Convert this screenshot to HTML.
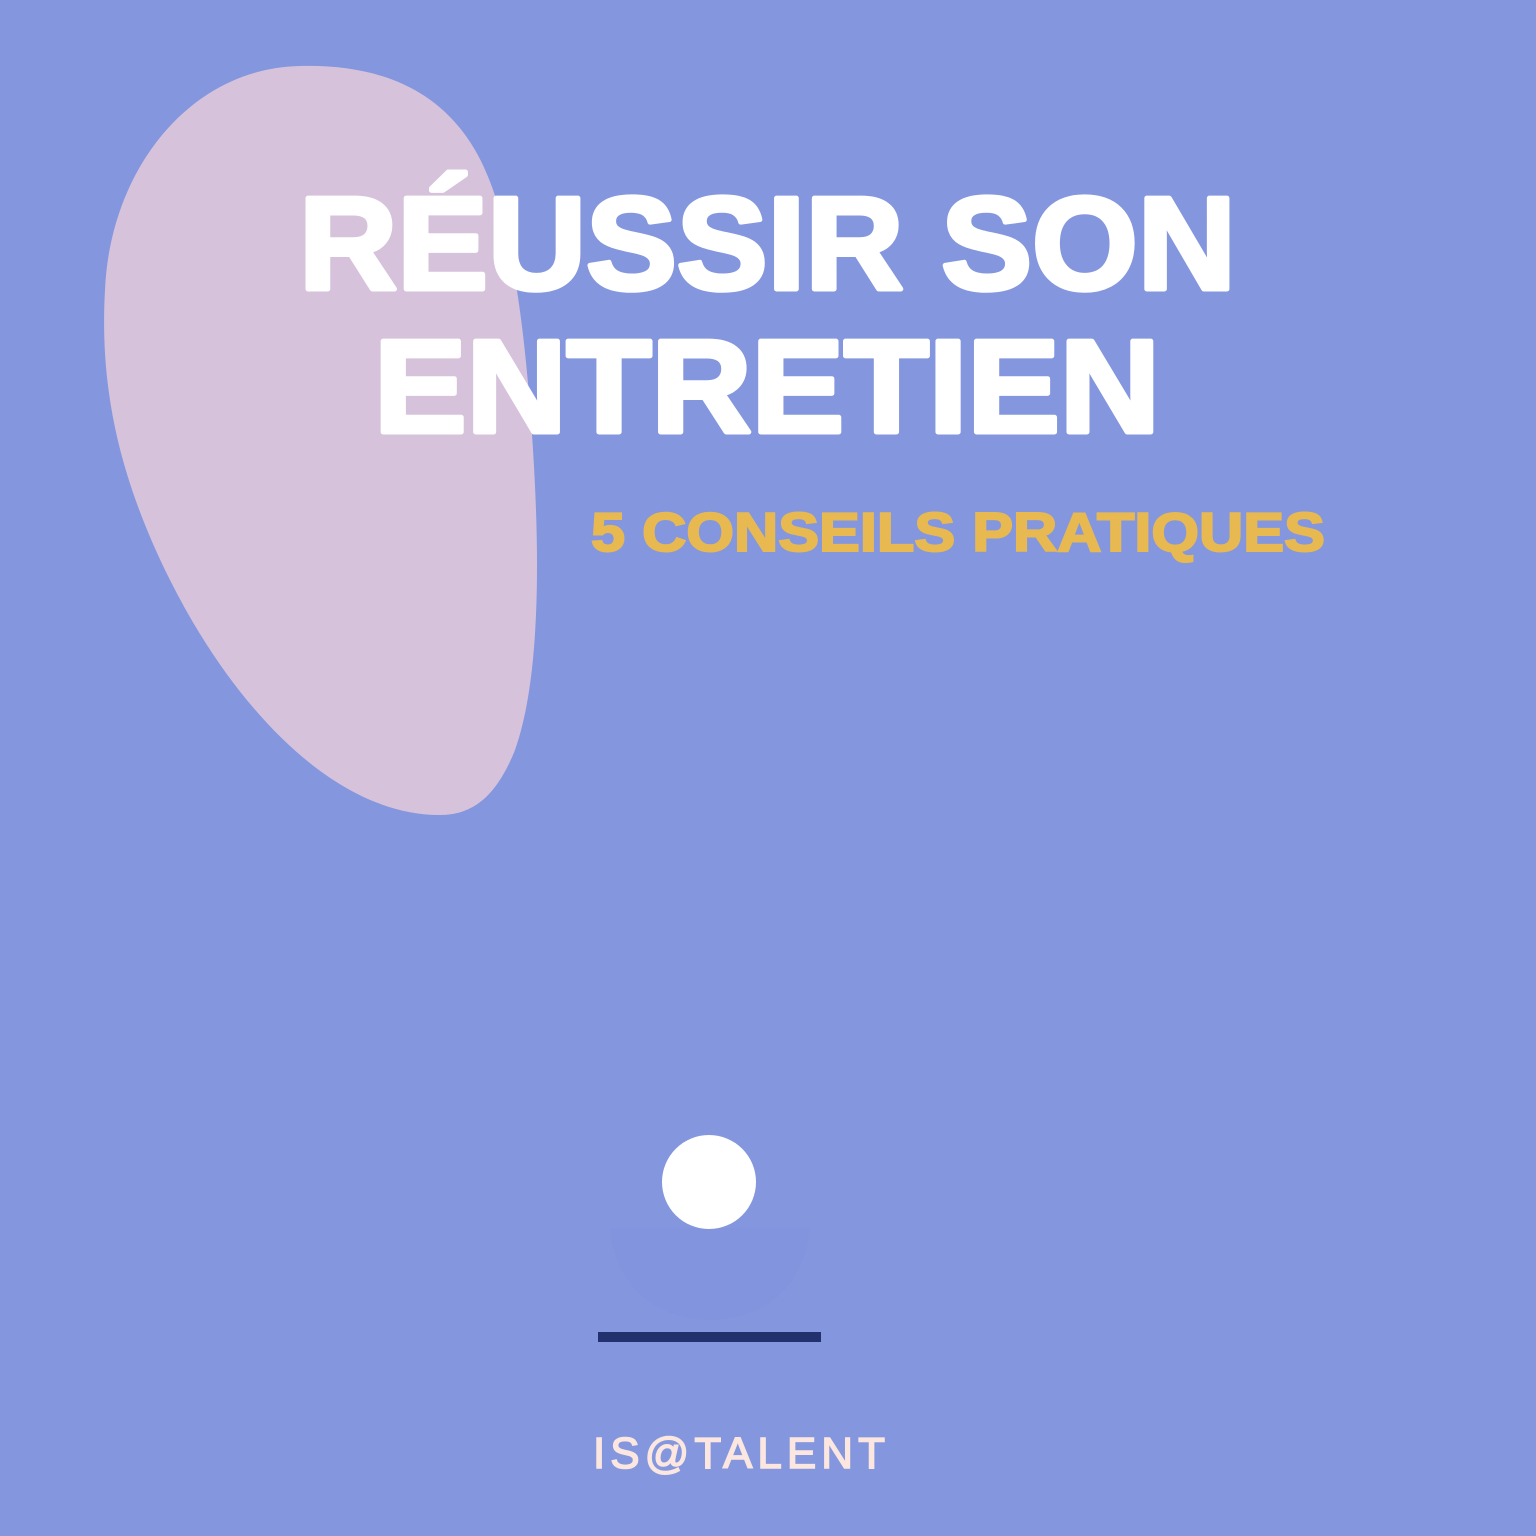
<!DOCTYPE html>
<html><head><meta charset="utf-8"><style>
html,body{margin:0;padding:0}
body{width:1536px;height:1536px;background:#8497de;overflow:hidden}
</style></head><body>
<svg width="1536" height="1536" viewBox="0 0 1536 1536" xmlns="http://www.w3.org/2000/svg" style="display:block">
<rect width="1536" height="1536" fill="#8497de"/>
<path d="M300,66 C380,64 440,90 475,150 C510,210 525,320 533,450 C540,560 540,680 515,750 C495,800 470,815 440,815 C330,815 230,700 170,580 C115,470 100,380 105,290 C110,170 190,68 300,66 Z" fill="#d6c3db"/>
<g font-family="Liberation Sans, sans-serif" font-weight="bold" fill="#ffffff" stroke="#ffffff" stroke-width="5" stroke-linejoin="round">
<text x="299" y="289" font-size="132" textLength="937" lengthAdjust="spacingAndGlyphs">RÉUSSIR SON</text>
<text x="374" y="432" font-size="132" textLength="786" lengthAdjust="spacingAndGlyphs">ENTRETIEN</text>
</g>
<text x="591" y="551" font-family="Liberation Sans, sans-serif" font-weight="bold" font-size="55" fill="#e8b951" stroke="#e8b951" stroke-width="2" textLength="734" lengthAdjust="spacingAndGlyphs">5 CONSEILS PRATIQUES</text>
<path d="M610,1228 L810,1228 C805,1290 760,1320 710,1320 C660,1320 615,1290 610,1228 Z" fill="#7f92dc" opacity="0.6"/>
<circle cx="709" cy="1182" r="47" fill="#ffffff"/>
<rect x="598" y="1332" width="223" height="10" fill="#22306e"/>
<text x="593" y="1468" font-family="Liberation Sans, sans-serif" font-size="44" fill="#fbe6e0" stroke="#fbe6e0" stroke-width="1.5" textLength="292" lengthAdjust="spacing">IS@TALENT</text>
</svg>
</body></html>
